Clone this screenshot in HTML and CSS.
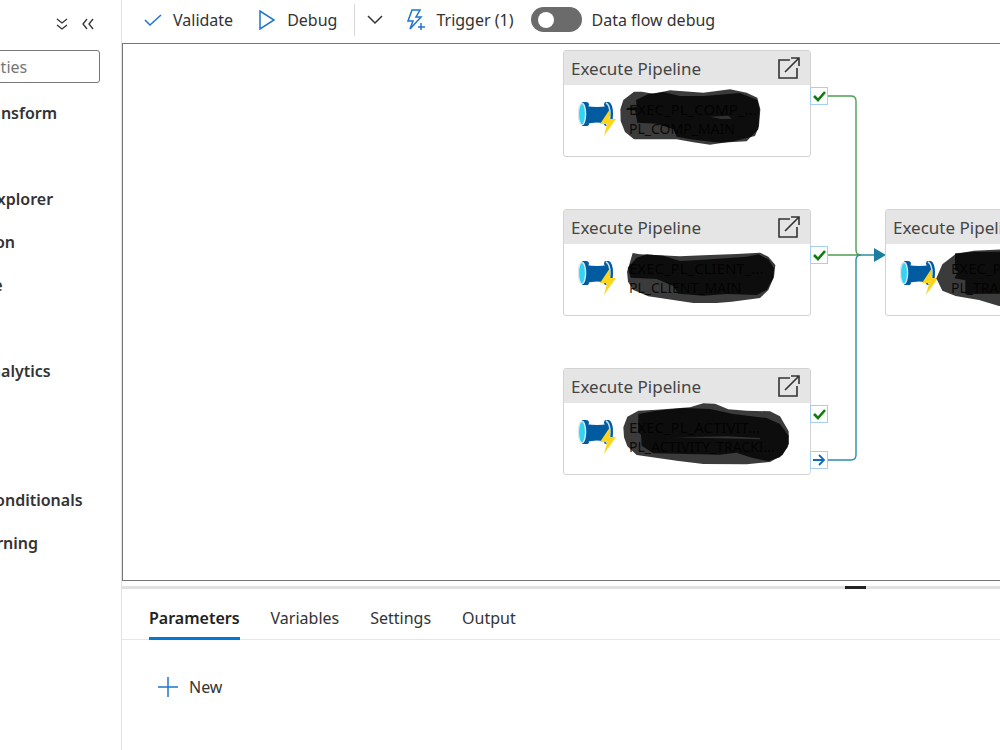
FILE: index.html
```
<!DOCTYPE html>
<html lang="en">
<head>
  <meta charset="UTF-8" />
  <meta name="viewport" content="width=device-width, initial-scale=1.0"/>
  <title>Pipeline editor</title>
  <link rel="stylesheet" href="styles.css">
</head>
<body>
  <!-- icons used more than once -->
  <svg class="sprite" aria-hidden="true">
    <symbol id="icon-open" viewBox="0 0 24 24">
      <path d="M12 4H1v18h18V12M7 16 21 2M13 2h8v8" fill="none" stroke="#333" stroke-width="1.6"/>
    </symbol>
    <symbol id="icon-pipeline" viewBox="0 0 38 37">
      <path d="M8 5Q19 7 30 5V23Q19 20 8 23z" fill="#005ba1"/>
      <path d="M4 1h4q3 0 3 3l-1 2v15l1 2q0 2-3 2H4zM28 1h3q4 2 4 12t-4 12h-3q-2 0-2-2l1-3V6l-1-2q0-3 2-3z" fill="#005ba1"/>
      <path d="M28 2q4 2 4 11t-4 11" fill="none" stroke="#d5e4f0" stroke-width="1.4"/>
      <ellipse cx="4" cy="13" rx="3.600" ry="10.800" fill="#32d4f5" stroke="#dfe6ea" stroke-width="1.4"/>
      <path d="M32 8 22 23h7l-3 12 12-17h-7z" fill="#ffd51c"/>
    </symbol>
    <symbol id="icon-success" viewBox="0 0 16 16">
      <path d="M3 8l4 4 7-8" fill="none" stroke="#107c10" stroke-width="2.6"/>
    </symbol>
    <symbol id="icon-completion" viewBox="0 0 16 16">
      <path d="M2 8h11M8 3l5 5-5 5" fill="none" stroke="#0f6cbd" stroke-width="1.8"/>
    </symbol>
  </svg>

  <div class="app">
    <aside class="sidebar">
      <div class="activities">
        <div class="sidebar-actions">
          <button class="icon-btn" aria-label="Expand all">
            <svg width="12" height="12" viewBox="0 0 12 12"><path d="M1 1l5 4 5-4M1 7l5 4 5-4"/></svg>
          </button>
          <button class="icon-btn" aria-label="Collapse pane">
            <svg width="12" height="12" viewBox="0 0 12 12"><path d="M5 1 1 6l4 5M11 1 7 6l4 5"/></svg>
          </button>
        </div>
        <input class="search" type="text" placeholder="Search activities" aria-label="Search activities" />
        <ul class="groups">
          <li>Move and transform</li>
          <li>Synapse</li>
          <li>Azure Data Explorer</li>
          <li>Azure Function</li>
          <li>Batch Service</li>
          <li>Databricks</li>
          <li>Data Lake Analytics</li>
          <li>General</li>
          <li>HDInsight</li>
          <li>Iteration &amp; conditionals</li>
          <li>Machine Learning</li>
          <li>Power Query</li>
        </ul>
      </div>
    </aside>

    <main class="main">
      <div class="toolbar">
        <button class="tool">
          <svg width="18" height="18" viewBox="0 0 18 18"><path d="M1 9l5 5L17 4"/></svg>
          Validate
        </button>
        <button class="tool">
          <svg width="18" height="20" viewBox="0 0 18 20"><path d="M2 1v18L16 10z"/></svg>
          Debug
        </button>
        <button class="tool more" aria-label="Debug options">
          <svg width="16" height="10" viewBox="0 0 16 10"><path d="M1 1l7 7 7-7"/></svg>
        </button>
        <button class="tool trigger">
          <svg width="18" height="22" viewBox="0 0 18 22"><path d="M5 1h8L9 8h5L3 20l3-8H1zM14 14v7M11 18h7"/></svg>
          Trigger (1)
        </button>
        <input class="switch" type="checkbox" id="dataflow" />
        <label for="dataflow">Data flow debug</label>
      </div>

      <section class="canvas">
        <svg class="links" aria-hidden="true">
          <path class="success" d="M705 52H728Q733 52 733 57V206Q733 211 738 211M705 211H738"/>
          <path class="completion" d="M705 416H728Q733 416 733 411V216Q733 211 738 211H752"/>
          <path class="arrow" d="M751 204v14l12-7z"/>
        </svg>

        <article class="node node-comp">
          <header>Execute Pipeline <button aria-label="Open pipeline"><svg width="24" height="24"><use href="#icon-open"/></svg></button></header>
          <div class="node-body">
            <svg width="38" height="37"><use href="#icon-pipeline"/></svg>
            <p class="names"><span>EXEC_PL_COMP_...</span><small>PL_COMP_MAIN</small></p>
          </div>
          <svg class="marker" viewBox="0 0 780 345" aria-hidden="true">
            <path d="M181 190 190 162 222 137 245 137 280 143 330 133 390 137 430 140 510 130 560 140 592 155 601 190 597 240 585 270 520 286 450 296 400 289 350 280 222 280 195 258 182 225z"/>
            <path d="M200 186 230 182 228 162 265 144 310 138 360 150 430 150 540 141 592 162 599 190 595 250 560 286 480 290 400 281 350 272 340 250 290 233 232 230 225 192 200 192z"/>
            <path class="gap" d="M450 212 505 209 516 218 484 219z"/>
          </svg>
          <span class="port"><svg width="16" height="16"><use href="#icon-success"/></svg></span>
        </article>

        <article class="node node-client">
          <header>Execute Pipeline <button aria-label="Open pipeline"><svg width="24" height="24"><use href="#icon-open"/></svg></button></header>
          <div class="node-body">
            <svg width="38" height="37"><use href="#icon-pipeline"/></svg>
            <p class="names"><span>EXEC_PL_CLIENT_...</span><small>PL_CLIENT_MAIN</small></p>
          </div>
          <svg class="marker" viewBox="0 0 780 345" aria-hidden="true">
            <path d="M201 200 210 172 218 144 240 148 360 154 430 151 530 147 600 143 625 155 646 180 642 215 625 255 600 279 515 290 470 294 400 294 345 286 265 274 220 255 204 230z"/>
            <path d="M203 188 230 158 260 148 310 152 360 168 430 164 560 155 595 148 625 163 642 190 640 220 620 255 590 270 500 267 430 272 355 266 340 243 290 222 212 218z"/>
          </svg>
          <span class="port"><svg width="16" height="16"><use href="#icon-success"/></svg></span>
        </article>

        <article class="node node-activity">
          <header>Execute Pipeline <button aria-label="Open pipeline"><svg width="24" height="24"><use href="#icon-open"/></svg></button></header>
          <div class="node-body">
            <svg width="38" height="37"><use href="#icon-pipeline"/></svg>
            <p class="names"><span>EXEC_PL_ACTIVIT...</span><small>PL_ACTIVITY_TRACKI...</small></p>
          </div>
          <svg class="marker" viewBox="0 0 780 345" aria-hidden="true">
            <path d="M190 190 202 158 235 140 290 137 390 130 430 118 465 119 505 136 560 140 630 142 660 157 686 202 687 240 668 273 630 294 560 301 430 300 350 290 230 273 202 247 192 220z"/>
            <path d="M235 150 290 140 370 132 450 135 520 150 620 162 660 180 686 215 683 250 660 280 625 292 570 280 530 266 480 272 280 268 245 245 243 212 234 205z"/>
            <path class="gap" d="M340 220 430 218 500 217 600 222 600 226 470 223z"/>
          </svg>
          <span class="port"><svg width="16" height="16"><use href="#icon-success"/></svg></span>
          <span class="port port-completion"><svg width="16" height="16"><use href="#icon-completion"/></svg></span>
        </article>

        <article class="node node-transform">
          <header>Execute Pipeline <button aria-label="Open pipeline"><svg width="24" height="24"><use href="#icon-open"/></svg></button></header>
          <div class="node-body">
            <svg width="38" height="37"><use href="#icon-pipeline"/></svg>
            <p class="names"><span>EXEC_PL_TRAN...</span><small>PL_TRANSFORM</small></p>
          </div>
          <svg class="marker" viewBox="0 0 780 345" aria-hidden="true">
            <path d="M163 220 181 178 221 147 275 137 360 133 560 140 640 200 600 290 470 310 351 303 291 285 221 273 181 257z"/>
            <path d="M219 145 270 141 360 140 560 150 630 200 590 265 250 267 250 226 217 220 228 200 219 196z"/>
          </svg>
        </article>
      </section>

      <section class="panel">
        <div class="grip"></div>
        <div class="tabs" role="tablist">
          <button class="tab active" role="tab" aria-selected="true">Parameters</button>
          <button class="tab" role="tab">Variables</button>
          <button class="tab" role="tab">Settings</button>
          <button class="tab" role="tab">Output</button>
        </div>
        <button class="tool new">
          <svg width="20" height="20" viewBox="0 0 20 20"><path d="M10 0v20M0 10h20"/></svg>
          New
        </button>
      </section>
    </main>
  </div>
</body>
</html>
```

FILE: styles.css
```
* {
  box-sizing: border-box;
}

body {
  margin: 0;
  font-family: "Noto Sans", "Open Sans", sans-serif;
  font-size: 16px;
  color: #333;
  background-color: #fff;
}

button,
input {
  font: inherit;
  color: inherit;
}

button {
  padding: 0;
  border: none;
  background: none;
  cursor: pointer;
}

svg {
  flex: none;
}

.sprite {
  position: absolute;
  width: 0;
  height: 0;
}

.app {
  display: flex;
  min-height: 100vh;
  overflow: hidden;
}

/* activities pane, slid partly off the left side */
.sidebar {
  flex: none;
  width: 122px;
  overflow: hidden;
  border-right: 1px solid #e1e1e1;
}

.activities {
  margin-left: -140px;
  padding: 12px 21px 0 0;
}

.sidebar-actions {
  display: flex;
  justify-content: flex-end;
  gap: 14px;
  height: 38px;
  padding-right: 6px;
}

.icon-btn {
  display: flex;
  align-items: center;
  height: 24px;
}

.icon-btn path {
  fill: none;
  stroke: #333;
  stroke-width: 1.3;
}

.search {
  display: block;
  width: 100%;
  height: 33px;
  padding: 0 46px;
  border: 1px solid #767676;
  border-radius: 3px;
  background-color: #fff;
}

.search::placeholder {
  color: #767676;
}

.groups {
  list-style: none;
  margin: 9px 0 0;
  padding: 0 0 0 38px;
  font-weight: 600;
  white-space: nowrap;
}

.groups li {
  height: 43px;
  line-height: 43px;
}

.main {
  flex: 1;
  min-width: 0;
  display: flex;
  flex-direction: column;
}

.toolbar {
  display: flex;
  align-items: center;
  height: 43px;
  padding: 0 0 4px 22px;
  white-space: nowrap;
}

.tool {
  display: flex;
  align-items: center;
  gap: 11px;
  margin-right: 25px;
}

.tool path {
  fill: none;
  stroke: #1f74d0;
  stroke-width: 1.5;
}

.tool + .tool.more {
  height: 32px;
  margin: 0 24px 0 -8px;
  padding-left: 12px;
  border-left: 1px solid #d6d6d6;
}

.tool.more path {
  stroke: #333;
}

.tool.trigger {
  margin-right: 18px;
}

.switch {
  appearance: none;
  display: flex;
  align-items: center;
  width: 51px;
  height: 25px;
  margin: 0 9px 0 0;
  padding: 0 7px;
  border-radius: 13px;
  background-color: #6b6b6b;
}

.switch::before {
  content: "";
  width: 16px;
  height: 16px;
  border-radius: 50%;
  background-color: #fff;
}

.switch:checked {
  justify-content: flex-end;
}

/* free canvas: nodes sit at their own coordinates */
.canvas {
  position: relative;
  flex: 1;
  min-height: 500px;
  overflow: hidden;
  border: 1px solid #767676;
  border-right: none;
}

.links {
  position: absolute;
  left: 0;
  top: 0;
  width: 100%;
  height: 100%;
}

.links path {
  fill: none;
  stroke-width: 1.4;
}

.links .success {
  stroke: #4f9f50;
}

.links .completion {
  stroke: #2c8cab;
}

.links .arrow {
  fill: #1b7f9f;
}

.node {
  position: absolute;
  width: 248px;
  height: 107px;
  border: 1px solid #d2d2d2;
  border-radius: 3px;
  background-color: #fff;
}

.node-comp {
  left: 440px;
  top: 6px;
}

.node-client {
  left: 440px;
  top: 165px;
}

.node-activity {
  left: 440px;
  top: 324px;
}

.node-transform {
  left: 762px;
  top: 165px;
}

.node header {
  display: flex;
  justify-content: space-between;
  align-items: center;
  height: 34px;
  padding: 0 8px 0 7px;
  font-size: 17px;
  color: #444;
  background-color: #e5e5e5;
}

.node header button,
.port {
  display: flex;
}

.node-body {
  display: flex;
  gap: 13px;
  padding: 16px 0 0 14px;
}

.names {
  display: flex;
  flex-direction: column;
  margin: -2px 0 0;
  line-height: 20px;
  font-size: 15px;
  white-space: nowrap;
}

.names small {
  font-size: 14px;
}

/* black marker strokes over the pipeline names */
.marker {
  position: absolute;
  left: -4px;
  top: -5px;
  width: 260px;
  height: 115px;
}

.marker path {
  fill: #000;
  fill-opacity: 0.77;
}

.marker .gap {
  fill: #3d3d3d;
}

.port {
  position: absolute;
  left: 246px;
  top: 36px;
  border: 1px solid #a6cdf2;
  background-color: #fff;
}

.port-completion {
  top: 82px;
}

.panel {
  height: 164px;
  margin-top: 5px;
  border-top: 3px solid #e1e1e1;
}

.grip {
  width: 21px;
  height: 3px;
  margin: -3px 134px 0 auto;
  background-color: #222;
}

.tabs {
  display: flex;
  gap: 31px;
  height: 51px;
  padding-left: 27px;
  border-bottom: 1px solid #e6e6e6;
}

.tab {
  height: 51px;
  padding-top: 9px;
  border-bottom: 3px solid transparent;
}

.tab.active {
  font-weight: 600;
  color: #222;
  border-bottom-color: #0078d4;
}

.tool.new {
  margin: 36px 0 0 36px;
}
```
